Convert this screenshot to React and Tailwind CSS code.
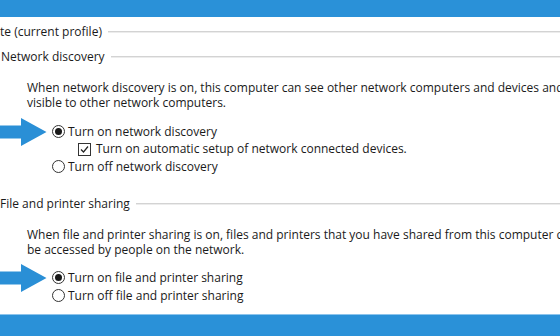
const font = { fontFamily: '"Open Sans", "Noto Sans", sans-serif' };

function Arrow() {
  return (
    <svg className="absolute left-0 top-1/2 -translate-y-1/2" width="47" height="30" viewBox="0 0 47 30">
      <path d="M0 8.5 H21 V1 L46.5 15 L21 29 V21.5 H0 Z" fill="#2a8fd6" />
    </svg>
  );
}

function Radio({ checked }) {
  return (
    <span className="w-[13px] h-[13px] rounded-full border border-[#333] bg-white flex items-center justify-center shrink-0">
      {checked && <span className="w-[7px] h-[7px] rounded-full bg-[#1a1a1a]" />}
    </span>
  );
}

function Check() {
  return (
    <span className="w-[13px] h-[13px] border border-[#333] bg-white flex items-center justify-center shrink-0">
      <svg width="9" height="9" viewBox="0 0 9 9">
        <path d="M1 4.5 L3.5 7 L8 1.5" fill="none" stroke="#222" strokeWidth="1.2" />
      </svg>
    </span>
  );
}

function Heading({ children }) {
  return (
    <div className="flex items-center h-4 gap-[6px]">
      <span className="whitespace-nowrap">{children}</span>
      <div className="flex-1 flex flex-col">
        <div className="h-px bg-[#d3d3d3]" />
        <div className="h-px bg-[#ececec]" />
      </div>
    </div>
  );
}

function Option({ children, checked, arrow }) {
  return (
    <div className="relative flex items-center h-[17px] pl-[52px] gap-[3px]">
      {arrow && <Arrow />}
      <Radio checked={checked} />
      <span className="whitespace-nowrap">{children}</span>
    </div>
  );
}

export default function App() {
  return (
    <div className="w-[560px] h-[336px] bg-white overflow-hidden flex flex-col text-[12px] text-[#1a1a1a]" style={font}>
      <div className="h-[17px] bg-[#2a91d8] shrink-0" />

      <div className="mt-[7px]">
        <Heading>te (current profile)</Heading>
      </div>
      <div className="mt-[9px] pl-px">
        <Heading>Network discovery</Heading>
      </div>

      <div className="mt-[15px] pl-[27px] leading-[15px] whitespace-nowrap">
        <p>When network discovery is on, this computer can see other network computers and devices and</p>
        <p>visible to other network computers.</p>
      </div>

      <div className="mt-[13px] flex flex-col">
        <Option checked arrow>Turn on network discovery</Option>
        <div className="flex items-center h-[18px] pl-[78px] gap-[5px]">
          <Check />
          <span className="whitespace-nowrap">Turn on automatic setup of network connected devices.</span>
        </div>
        <Option>Turn off network discovery</Option>
      </div>

      <div className="mt-[21px]">
        <Heading>File and printer sharing</Heading>
      </div>

      <div className="mt-[15px] pl-[27px] leading-[15px] whitespace-nowrap">
        <p>When file and printer sharing is on, files and printers that you have shared from this computer can</p>
        <p>be accessed by people on the network.</p>
      </div>

      <div className="mt-[12px] flex flex-col gap-[1px]">
        <Option checked arrow>Turn on file and printer sharing</Option>
        <Option>Turn off file and printer sharing</Option>
      </div>

      <div className="mt-auto h-[22px] bg-[#2a91d8] border-t border-[#8cc4ec] shrink-0" />
    </div>
  );
}
